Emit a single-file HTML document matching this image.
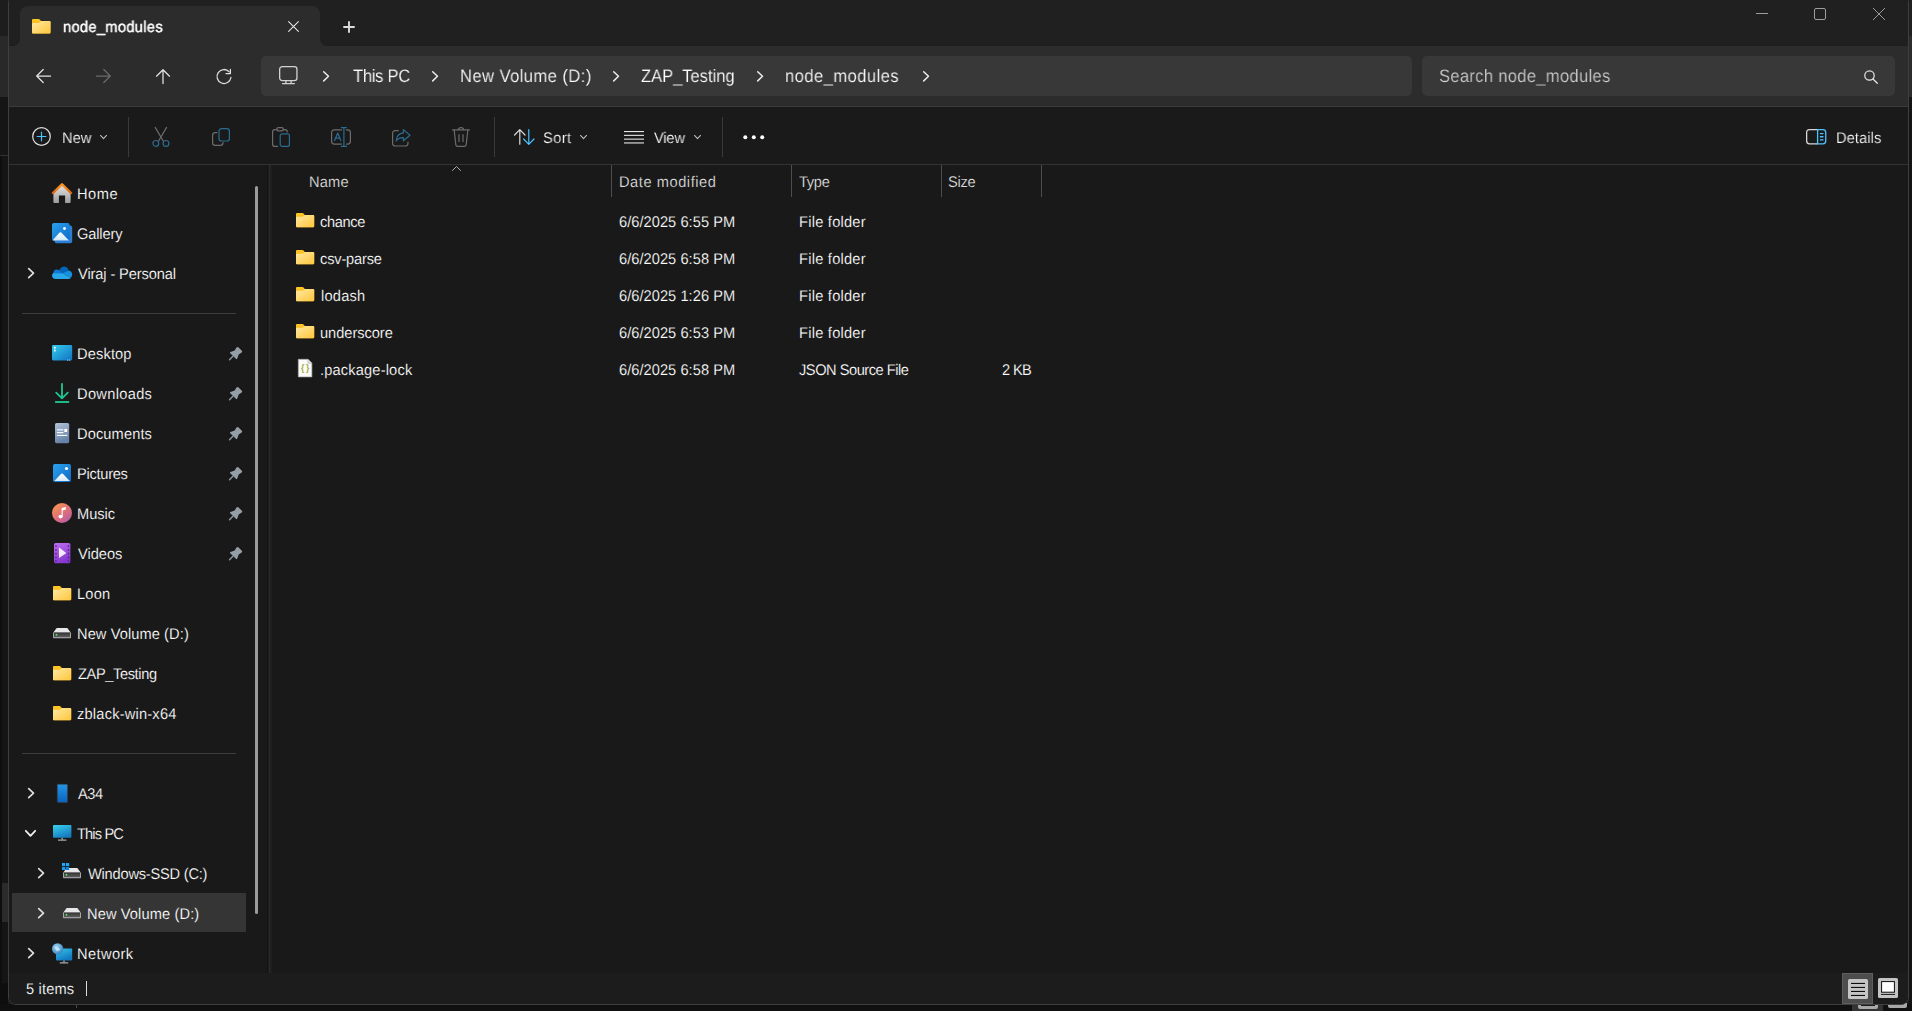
<!DOCTYPE html>
<html lang="en"><head><meta charset="utf-8"><title>node_modules - File Explorer</title>
<style>
*{box-sizing:border-box}
html,body{margin:0;padding:0}
body{width:1912px;height:1011px;overflow:hidden;background:#1c1c1c;font-family:"Liberation Sans",sans-serif;color:#fff;position:relative}
.t{position:absolute;height:20px;line-height:20px;white-space:pre;transform-origin:0 50%;text-rendering:geometricPrecision;-webkit-text-stroke:0.16px #191919}
.a{position:absolute}
svg{position:absolute;overflow:visible}
.win{position:absolute;left:8px;top:-5px;width:1901px;height:1010px;border:1px solid #3f3f3f;border-radius:8px;background:#191919;overflow:hidden}
.win>div{position:absolute;left:0;right:0}
.tabbar{top:0;height:50px;background:#202020;border-bottom:1px solid #1d1d1d}
.navbar{top:50px;height:61px;background:#2c2c2c;border-bottom:1px solid #3b3b3b}
.cmdbar{top:111px;height:58px;background:#1a1a1a;border-bottom:1px solid #333}
.status{top:977px;height:32px;background:#1c1c1c}
.tab{position:absolute;left:20px;top:6px;width:300px;height:40px;background:#2c2c2c;border-radius:8px 8px 0 0}
.tab:before,.tab:after{content:"";position:absolute;bottom:0;width:7px;height:7px;background:radial-gradient(circle at 0 0,rgba(44,44,44,0) 6.5px,#2c2c2c 7.5px)}
.tab:before{left:-7px}
.tab:after{right:-7px;background:radial-gradient(circle at 100% 0,rgba(44,44,44,0) 6.5px,#2c2c2c 7.5px)}
.box{position:absolute;top:56px;height:40px;background:#383838;border-radius:5px}
.vsep{position:absolute;width:1px;background:#3a3a3a}
.hsep{position:absolute;height:1px;background:#3d3d3d}
.colsep{position:absolute;width:1px;top:165px;height:32px;background:#4d4d4d}
.sel{position:absolute;left:12px;top:893px;width:234px;height:39px;background:#353535}
</style></head>
<body>
<div class="a" style="left:0;top:0;width:8px;height:36px;background:#1d1d1d"></div><div class="a" style="left:0;top:36px;width:8px;height:61px;background:#292929"></div><div class="a" style="left:0;top:97px;width:8px;height:58px;background:#151515"></div><div class="a" style="left:0;top:155px;width:8px;height:1px;background:#303030"></div><div class="a" style="left:0;top:156px;width:8px;height:855px;background:#151515"></div><div class="a" style="left:0;top:156px;width:2px;height:855px;background:#0e0e0e"></div><div class="a" style="left:2px;top:883px;width:6px;height:39px;background:#2b2b2b"></div><div class="a" style="left:0;top:983px;width:8px;height:28px;background:#0e0e0e"></div><div class="a" style="left:1909px;top:0;width:3px;height:36px;background:#202020"></div><div class="a" style="left:1909px;top:36px;width:3px;height:61px;background:#2c2c2c"></div><div class="a" style="left:1909px;top:97px;width:3px;height:914px;background:#141414"></div><div class="a" style="left:0;top:1004px;width:1912px;height:7px;background:#101010"></div><div class="a" style="left:76px;top:1005px;width:1px;height:3px;background:#4a4a4a"></div><div class="a" style="left:1852px;top:1003px;width:31px;height:8px;background:#333"></div><div class="a" style="left:1858px;top:1003px;width:20px;height:6px;background:#a8a8a8;border-radius:0 0 2px 2px"></div><div class="a" style="left:1861px;top:1005px;width:14px;height:1px;background:#1a1a1a"></div><div class="a" style="left:1888px;top:1003px;width:19px;height:5px;background:#a8a8a8;border-radius:0 0 2px 2px"></div>
<div class="win"><div class="tabbar"></div><div class="navbar"></div><div class="cmdbar"></div><div class="status"></div></div>
<header class="titlebar">
<div class="tab"></div>
<svg style="left:32px;top:19px" width="18.5" height="14.5" viewBox="0 0 18.5 14.5" ><defs><linearGradient id="g1" x1="0" y1="0" x2="0" y2="1"><stop offset="0" stop-color="#ffc825"/><stop offset="1" stop-color="#e8a410"/></linearGradient><linearGradient id="g2" x1="0" y1="0" x2="1" y2="1"><stop offset="0" stop-color="#ffe9a6"/><stop offset="1" stop-color="#ffc63a"/></linearGradient></defs><g transform="scale(1.0165,1.0211)"><path fill="url(#g1)" d="M0,1 Q0,0 1,0 L6.4,0 Q7.1,0 7.6,0.5 L8.8,1.9 L17.2,1.9 Q18.2,1.9 18.2,2.9 L18.2,13.2 Q18.2,14.2 17.2,14.2 L1,14.2 Q0,14.2 0,13.2 Z"/><path fill="url(#g2)" d="M0,4.8 Q0,3.8 1,3.8 L6.2,3.8 Q6.9,3.8 7.4,3.3 L8.2,2.5 Q8.8,1.9 9.6,1.9 L17.2,1.9 Q18.2,1.9 18.2,2.9 L18.2,13.2 Q18.2,14.2 17.2,14.2 L1,14.2 Q0,14.2 0,13.2Z"/></g></svg>
<span class="t" style="left:62.99px;top:17.66px;font-size:15.4px;letter-spacing:0.355px;transform:scaleX(0.95);will-change:transform;-webkit-text-stroke:0.45px #fff">node_modules</span>
<svg style="left:287.9px;top:20.6px" width="11" height="11" viewBox="0 0 11 11" ><g fill="none" stroke="#e4e4e4" stroke-width="1.1" stroke-linecap="round" stroke-linejoin="round"><path d="M0.6,0.6 L10.4,10.4 M10.4,0.6 L0.6,10.4"/></g></svg><svg style="left:343px;top:21px" width="12" height="12" viewBox="0 0 12 12" shape-rendering="auto"><g fill="none" stroke="#dcdcdc" stroke-width="1.9" stroke-linecap="butt" stroke-linejoin="round"><path d="M6,0.3 V11.7 M0.3,6 H11.7"/></g></svg>
<div class="a" style="left:1756px;top:13px;width:12px;height:1px;background:#9d9d9d"></div><div class="a" style="left:1814px;top:8px;width:12px;height:12px;border:1px solid #9d9d9d;border-radius:2px"></div><svg style="left:1873px;top:8px" width="12" height="12" viewBox="0 0 12 12" ><g fill="none" stroke="#9d9d9d" stroke-width="1.0" stroke-linecap="round" stroke-linejoin="round"><path d="M0.3,0.3 L11.7,11.7 M11.7,0.3 L0.3,11.7"/></g></svg>
</header>
<nav class="navigation">
<svg style="left:36px;top:69px" width="15" height="14" viewBox="0 0 15 14" ><g fill="none" stroke="#e2e2e2" stroke-width="1.25" stroke-linecap="round" stroke-linejoin="round"><path d="M14.6,7 H0.8 M7.2,0.5 L0.7,7 L7.2,13.5"/></g></svg><svg style="left:96px;top:69px" width="15" height="14" viewBox="0 0 15 14" ><g fill="none" stroke="#6b6b6b" stroke-width="1.25" stroke-linecap="round" stroke-linejoin="round"><path d="M0.4,7 H14.2 M7.8,0.5 L14.3,7 L7.8,13.5"/></g></svg><svg style="left:156px;top:69px" width="14" height="15" viewBox="0 0 14 15" ><g fill="none" stroke="#e2e2e2" stroke-width="1.25" stroke-linecap="round" stroke-linejoin="round"><path d="M7,14.6 V0.8 M0.5,7.2 L7,0.7 L13.5,7.2"/></g></svg><svg style="left:215.5px;top:69px" width="16" height="15" viewBox="0 0 16 15" ><g fill="none" stroke="#e2e2e2" stroke-width="1.25" stroke-linecap="round" stroke-linejoin="round"><path d="M14.93,8.47 A7,7 0 1 1 13.2,2.82"/><path d="M14.4,0.4 V4.5 H10"/></g></svg>
<div class="box" style="left:261px;width:1151px"></div>
<svg style="left:278.6px;top:66.4px" width="18.6" height="18.2" viewBox="0 0 18.6 18.2" ><g fill="none" stroke="#d2d2d2" stroke-width="1.3" stroke-linecap="round" stroke-linejoin="round"><rect x="0.65" y="0.65" width="17.3" height="13.9" rx="2.6"/><path d="M6.9,14.6 V17.4 M12.1,14.6 V17.4 M3.5,17.55 H15.4"/></g></svg><svg style="left:322.9px;top:71.2px" width="6.2" height="10.6" viewBox="0 0 6.2 10.6" ><g fill="none" stroke="#ececec" stroke-width="1.5" stroke-linecap="round" stroke-linejoin="round"><path d="M0.7,0.7 L5.5,5.3 L0.7,9.9"/></g></svg><svg style="left:431.9px;top:71.2px" width="6.2" height="10.6" viewBox="0 0 6.2 10.6" ><g fill="none" stroke="#ececec" stroke-width="1.5" stroke-linecap="round" stroke-linejoin="round"><path d="M0.7,0.7 L5.5,5.3 L0.7,9.9"/></g></svg><svg style="left:612.9px;top:71.2px" width="6.2" height="10.6" viewBox="0 0 6.2 10.6" ><g fill="none" stroke="#ececec" stroke-width="1.5" stroke-linecap="round" stroke-linejoin="round"><path d="M0.7,0.7 L5.5,5.3 L0.7,9.9"/></g></svg><svg style="left:756.9px;top:71.2px" width="6.2" height="10.6" viewBox="0 0 6.2 10.6" ><g fill="none" stroke="#ececec" stroke-width="1.5" stroke-linecap="round" stroke-linejoin="round"><path d="M0.7,0.7 L5.5,5.3 L0.7,9.9"/></g></svg><svg style="left:922.9px;top:71.2px" width="6.2" height="10.6" viewBox="0 0 6.2 10.6" ><g fill="none" stroke="#ececec" stroke-width="1.5" stroke-linecap="round" stroke-linejoin="round"><path d="M0.7,0.7 L5.5,5.3 L0.7,9.9"/></g></svg>
<span class="t" style="left:352.50px;top:65.76px;font-size:18px;letter-spacing:-0.304px;transform:scaleX(0.92);will-change:transform;-webkit-text-stroke-color:#383838">This PC</span><span class="t" style="left:460.35px;top:65.76px;font-size:18px;letter-spacing:0.473px;transform:scaleX(0.92);will-change:transform;-webkit-text-stroke-color:#383838">New Volume (D:)</span><span class="t" style="left:641.43px;top:65.76px;font-size:18px;letter-spacing:-0.036px;transform:scaleX(0.92);will-change:transform;-webkit-text-stroke-color:#383838">ZAP_Testing</span><span class="t" style="left:785.10px;top:65.76px;font-size:18px;letter-spacing:0.498px;transform:scaleX(0.92);will-change:transform;-webkit-text-stroke-color:#383838">node_modules</span>
<div class="box" style="left:1422px;width:473px"></div>
<span class="t" style="left:1439.20px;top:65.76px;font-size:18px;letter-spacing:0.336px;transform:scaleX(0.92);will-change:transform;-webkit-text-stroke-color:#383838;color:#cfcfcf">Search node_modules</span>
<svg style="left:1863.5px;top:70px" width="14" height="14" viewBox="0 0 14 14" ><g fill="none" stroke="#e4e4e4" stroke-width="1.25" stroke-linecap="round" stroke-linejoin="round"><circle cx="5.5" cy="5.5" r="4.7"/><path d="M9,9 L13.3,13.3"/></g></svg>
</nav>
<div class="commands">
<svg style="left:31.9px;top:127px" width="19" height="19" viewBox="0 0 19 19" ><g fill="none" stroke="#e0e0e0" stroke-width="1.2" stroke-linecap="round" stroke-linejoin="round"><circle cx="9.5" cy="9.5" r="8.8" stroke="#e0e0e0"/><path d="M5.2,9.5 H13.8 M9.5,5.2 V13.8" stroke="#4cc2ff"/></g></svg><svg style="left:99.6px;top:135.3px" width="7" height="4.2" viewBox="0 0 7 4.2" ><g fill="none" stroke="#bdbdbd" stroke-width="1.1" stroke-linecap="round" stroke-linejoin="round"><path d="M0.5,0.5 L3.5,3.7 L6.5,0.5"/></g></svg><div class="vsep" style="left:128px;top:117px;height:40px"></div><div class="vsep" style="left:494px;top:117px;height:40px"></div><div class="vsep" style="left:722px;top:117px;height:40px"></div><svg style="left:152px;top:127px" width="18" height="20" viewBox="0 0 18 20" ><g fill="none" stroke="#6c6c6c" stroke-width="1.2" stroke-linecap="round" stroke-linejoin="round"><path d="M3.2,0.4 L11.4,14.3 M14.6,0.4 L6.4,14.3" stroke="#6c6c6c"/><circle cx="3.8" cy="16.4" r="2.9" stroke="#2a6c92"/><circle cx="14" cy="16.4" r="2.9" stroke="#2a6c92"/></g></svg><svg style="left:212px;top:128px" width="18" height="18" viewBox="0 0 18 18" ><g fill="none" stroke="#6c6c6c" stroke-width="1.2" stroke-linecap="round" stroke-linejoin="round"><path d="M5,4.6 H3.2 Q0.6,4.6 0.6,7.2 V14.8 Q0.6,17.4 3.2,17.4 H8.4 Q11,17.4 11,14.8 V14.6" stroke="#6c6c6c"/><rect x="7" y="0.6" width="10.4" height="12.4" rx="2.6" stroke="#2a6c92"/></g></svg><svg style="left:272px;top:127px" width="18" height="20" viewBox="0 0 18 20" ><g fill="none" stroke="#6c6c6c" stroke-width="1.2" stroke-linecap="round" stroke-linejoin="round"><path d="M5,2.6 H2.8 Q0.6,2.6 0.6,4.8 V17.2 Q0.6,19.4 2.8,19.4 H5.6 M11.4,2.6 H13 Q15.2,2.6 15.2,4.8 V5" stroke="#6c6c6c"/><rect x="4.8" y="0.6" width="6.6" height="3.2" rx="1.6" stroke="#6c6c6c"/><rect x="8.2" y="6.8" width="9.2" height="12.6" rx="2" stroke="#2a6c92"/></g></svg><svg style="left:331px;top:127px" width="20" height="20" viewBox="0 0 20 20" ><g fill="none" stroke="#6c6c6c" stroke-width="1.2" stroke-linecap="round" stroke-linejoin="round"><path d="M10.4,2.9 H3.4 Q0.6,2.9 0.6,5.7 V14.3 Q0.6,17.1 3.4,17.1 H10.4 M15.4,2.9 H16.6 Q19.4,2.9 19.4,5.7 V14.3 Q19.4,17.1 16.6,17.1 H15.4" stroke="#6c6c6c"/><path d="M12.9,0.6 V19.4 M10.4,0.6 H15.4 M10.4,19.4 H15.4 M3.6,13.6 L6.7,6 L9.8,13.6 M4.6,11.2 H8.8" stroke="#2a6c92"/></g></svg><svg style="left:392px;top:128.5px" width="19" height="18" viewBox="0 0 19 18" ><g fill="none" stroke="#6c6c6c" stroke-width="1.2" stroke-linecap="round" stroke-linejoin="round"><path d="M6.4,1.6 H3.4 Q0.6,1.6 0.6,4.4 V14.2 Q0.6,17 3.4,17 H13.2 Q16,17 16,14.2 V13" stroke="#6c6c6c"/><path d="M11.4,0.6 L18,6.2 L11.4,11.8 V8.6 Q6.2,8.4 4.2,12 Q4.6,4.6 11.4,3.9 Z" stroke="#2a6c92"/></g></svg><svg style="left:452px;top:127px" width="18" height="20" viewBox="0 0 18 20" ><g fill="none" stroke="#6c6c6c" stroke-width="1.2" stroke-linecap="round" stroke-linejoin="round"><path d="M0.6,2.9 H17.4 M6.4,2.6 Q6.6,0.6 9,0.6 Q11.4,0.6 11.6,2.6 M2.2,3.2 L3.8,17.6 Q4,19.4 5.8,19.4 H12.2 Q14,19.4 14.2,17.6 L15.8,3.2 M7,7.6 V14.6 M11,7.6 V14.6" stroke="#6c6c6c"/></g></svg><svg style="left:513.5px;top:129px" width="21" height="16" viewBox="0 0 21 16" ><g fill="none" stroke="#dcdcdc" stroke-width="1.2" stroke-linecap="round" stroke-linejoin="round"><path d="M5.8,15.2 V0.8 M0.6,6 L5.8,0.7 L11,6" stroke="#dcdcdc"/><path d="M14.8,0.6 V15 M9.6,10 L14.8,15.3 L20,10" stroke="#4cc2ff"/></g></svg><svg style="left:579.8px;top:135.3px" width="7" height="4.2" viewBox="0 0 7 4.2" ><g fill="none" stroke="#bdbdbd" stroke-width="1.1" stroke-linecap="round" stroke-linejoin="round"><path d="M0.5,0.5 L3.5,3.7 L6.5,0.5"/></g></svg><svg style="left:624px;top:131px" width="20" height="13" viewBox="0 0 20 13" ><rect x="0" y="0" width="20" height="1.1" fill="#e6e6e6"/><rect x="0" y="3.8" width="20" height="1.1" fill="#e6e6e6"/><rect x="0" y="7.6" width="20" height="1.1" fill="#e6e6e6"/><rect x="0" y="11.4" width="20" height="1.1" fill="#e6e6e6"/></svg><svg style="left:693.5px;top:135.3px" width="7" height="4.2" viewBox="0 0 7 4.2" ><g fill="none" stroke="#bdbdbd" stroke-width="1.1" stroke-linecap="round" stroke-linejoin="round"><path d="M0.5,0.5 L3.5,3.7 L6.5,0.5"/></g></svg><svg style="left:742.5px;top:135px" width="22" height="5" viewBox="0 0 22 5" ><circle cx="2.3" cy="2.3" r="2" fill="#fff"/><circle cx="10.8" cy="2.3" r="2" fill="#fff"/><circle cx="19.2" cy="2.3" r="2" fill="#fff"/></svg><svg style="left:1805.8px;top:129px" width="20.4" height="15.5" viewBox="0 0 20.4 15.5" ><g fill="none" stroke="#d8d8d8" stroke-width="1.3" stroke-linecap="round" stroke-linejoin="round"><path d="M11.6,0.65 H3.4 Q0.65,0.65 0.65,3.4 V12.1 Q0.65,14.85 3.4,14.85 H11.6" stroke="#d8d8d8"/><path d="M11.6,0.65 H17 Q19.75,0.65 19.75,3.4 V12.1 Q19.75,14.85 17,14.85 H11.6 Z M14.4,4.6 H17 M14.4,7.75 H17 M14.4,10.9 H17" stroke="#4cc2ff"/></g></svg>
<span class="t" style="left:61.92px;top:128.66px;font-size:15.4px;letter-spacing:0.022px;transform:scaleX(0.95);will-change:transform;-webkit-text-stroke-color:#1a1a1a">New</span><span class="t" style="left:543.17px;top:128.66px;font-size:15.4px;letter-spacing:0.429px;transform:scaleX(0.95);will-change:transform;-webkit-text-stroke-color:#1a1a1a">Sort</span><span class="t" style="left:653.81px;top:128.66px;font-size:15.4px;letter-spacing:-0.161px;transform:scaleX(0.95);will-change:transform;-webkit-text-stroke-color:#1a1a1a">View</span><span class="t" style="left:1835.92px;top:128.66px;font-size:15.4px;letter-spacing:0.093px;transform:scaleX(0.95);will-change:transform;-webkit-text-stroke-color:#1a1a1a">Details</span>
</div>
<aside class="sidebar">
<div class="sel"></div>
<svg style="left:52px;top:183px" width="20" height="20" viewBox="0 0 20 20" ><defs><linearGradient id="g3" x1="0" y1="0" x2="0" y2="1"><stop offset="0" stop-color="#e4e4e4"/><stop offset="1" stop-color="#9c9c9c"/></linearGradient><linearGradient id="g4" x1="0" y1="0" x2="0" y2="1"><stop offset="0" stop-color="#ff9a2a"/><stop offset="1" stop-color="#e2640a"/></linearGradient></defs><path d="M1.4,9.4 L10,2 L18.6,9.4 V19 Q18.6,20 17.6,20 H13.1 V12.4 H6.9 V20 H2.4 Q1.4,20 1.4,19Z" fill="url(#g3)"/><path d="M0.9,10 L10,1.3 L19.1,10" fill="none" stroke="url(#g4)" stroke-width="2.4" stroke-linecap="round" stroke-linejoin="round"/></svg><svg style="left:52px;top:223px" width="20.2" height="20.2" viewBox="0 0 20.2 20.2" ><defs><linearGradient id="g5" x1="0" y1="0" x2="1" y2="1"><stop offset="0" stop-color="#2aa0ee"/><stop offset="1" stop-color="#0f6cc6"/></linearGradient><linearGradient id="g6" x1="0" y1="0" x2="0" y2="1"><stop offset="0" stop-color="#ffffff"/><stop offset="1" stop-color="#cfe6fb"/></linearGradient></defs><rect x="2.6" y="2.6" width="17.6" height="17.6" rx="2" fill="#2c7ed2"/><rect x="0" y="0" width="17.6" height="17.6" rx="1.8" fill="url(#g5)"/><path d="M0.6,17.2 L7.6,9.6 Q8.4,8.8 9.2,9.6 L16.8,17.2 Q16.6,17.6 16,17.6 H1.6 Q0.8,17.6 0.6,17.2Z" fill="url(#g6)"/><circle cx="12.5" cy="5.5" r="1.5" fill="#fff"/></svg><svg style="left:52px;top:266px" width="20.2" height="13" viewBox="0 0 20.2 13" ><path d="M7.6,3.4 Q9.2,0.6 12,0.6 Q15.6,0.6 16.6,4.6 L11.6,8 L6.4,4.2Z" fill="#0364b8"/><path d="M6.6,3.9 Q5.6,3.4 4.6,3.6 Q1.6,4 1.2,7.2 L4,12 L12,8 Z" fill="#0f78d4"/><path d="M16.6,4.6 Q20,5.2 20.2,8.6 Q20.2,10.6 18.8,11.8 L10.6,7.6 Z" fill="#1490df"/><path d="M1.2,7.2 Q0,8 0,9.6 Q0.2,13 3.6,13 H16.4 Q18,13 18.8,11.8 L10.6,7.6 Z" fill="#28a8ea"/></svg><svg style="left:52px;top:345px" width="20.2" height="15.8" viewBox="0 0 20.2 15.8" ><defs><linearGradient id="g7" x1="0" y1="0" x2="1" y2="1"><stop offset="0" stop-color="#35cdee"/><stop offset="1" stop-color="#0f72c2"/></linearGradient></defs><rect x="0" y="0" width="20.2" height="15.4" rx="1.4" fill="url(#g7)"/><rect x="2" y="1.9" width="1.7" height="1.7" fill="#fff"/><rect x="2" y="4.7" width="1.7" height="1.7" fill="#fff"/><rect x="15.2" y="14.6" width="1" height="1" fill="#d8ecf8"/><rect x="17.2" y="14.6" width="1" height="1" fill="#d8ecf8"/></svg><svg style="left:55px;top:383px" width="14.2" height="20" viewBox="0 0 14.2 20" ><path d="M7,0.8 V15 M1.2,9.6 L7,15.4 L12.8,9.6" fill="none" stroke="#22c493" stroke-width="1.8" stroke-linecap="round" stroke-linejoin="round"/><rect x="0" y="18" width="14.2" height="2" rx="0.6" fill="#1fb888"/></svg><svg style="left:55px;top:422.8px" width="14.2" height="20.2" viewBox="0 0 14.2 20.2" ><defs><linearGradient id="g8" x1="0" y1="0" x2="0.3" y2="1"><stop offset="0" stop-color="#b4c3d8"/><stop offset="1" stop-color="#6682a8"/></linearGradient></defs><rect x="0" y="0" width="14.2" height="20.2" rx="1.6" fill="url(#g8)"/><rect x="2" y="6.3" width="6.4" height="1.1" fill="#fff"/><rect x="2" y="9.1" width="6.4" height="1.1" fill="#fff"/><rect x="2" y="11.9" width="10.2" height="1.1" fill="#fff"/><rect x="9.3" y="5.9" width="2.9" height="3.1" fill="#fff"/></svg><svg style="left:53px;top:464px" width="18" height="18" viewBox="0 0 18 18" ><defs><linearGradient id="g9" x1="0" y1="0" x2="1" y2="1"><stop offset="0" stop-color="#2aa3f0"/><stop offset="1" stop-color="#0f68c2"/></linearGradient><linearGradient id="g10" x1="0" y1="0" x2="0" y2="1"><stop offset="0" stop-color="#ffffff"/><stop offset="1" stop-color="#d6eafc"/></linearGradient></defs><rect x="0" y="0" width="18" height="18" rx="1.8" fill="url(#g9)"/><path d="M1.4,17 L8.2,9.8 Q9,9 9.8,9.8 L16.8,17 Z" fill="url(#g10)"/><circle cx="13.5" cy="4.5" r="1.6" fill="#fff"/></svg><svg style="left:52px;top:503px" width="20" height="20" viewBox="0 0 20 20" ><defs><linearGradient id="g11" x1="0.15" y1="0.1" x2="0.85" y2="0.95"><stop offset="0" stop-color="#f59252"/><stop offset="0.55" stop-color="#dc6f7c"/><stop offset="1" stop-color="#b95aa8"/></linearGradient></defs><circle cx="10" cy="10" r="10" fill="url(#g11)"/><ellipse cx="8.6" cy="13.6" rx="2.1" ry="1.8" fill="#fff"/><path d="M9.6,13.6 V5 L13.8,4 V6.6 L10.7,7.4 V13.6Z" fill="#fff"/></svg><svg style="left:54px;top:543px" width="16.4" height="20.2" viewBox="0 0 16.4 20.2" ><defs><linearGradient id="g12" x1="0" y1="0" x2="0.4" y2="1"><stop offset="0" stop-color="#c070f0"/><stop offset="1" stop-color="#8538cf"/></linearGradient></defs><rect x="0" y="0" width="16.4" height="20.2" rx="1.6" fill="url(#g12)"/><rect x="1.2" y="2.2" width="1.5" height="1.7" rx="0.3" fill="#5a2490"/><rect x="1.2" y="6" width="1.5" height="1.7" rx="0.3" fill="#5a2490"/><rect x="1.2" y="9.8" width="1.5" height="1.7" rx="0.3" fill="#5a2490"/><rect x="1.2" y="13.6" width="1.5" height="1.7" rx="0.3" fill="#5a2490"/><rect x="1.2" y="17.0" width="1.5" height="1.7" rx="0.3" fill="#5a2490"/><rect x="13.7" y="2.2" width="1.5" height="1.7" rx="0.3" fill="#5a2490"/><rect x="13.7" y="6" width="1.5" height="1.7" rx="0.3" fill="#5a2490"/><rect x="13.7" y="9.8" width="1.5" height="1.7" rx="0.3" fill="#5a2490"/><rect x="13.7" y="13.6" width="1.5" height="1.7" rx="0.3" fill="#5a2490"/><rect x="13.7" y="17.0" width="1.5" height="1.7" rx="0.3" fill="#5a2490"/><path d="M5,5.4 Q5,4.5 5.8,5 L11.7,9.4 Q12.3,9.9 11.7,10.4 L5.8,14.6 Q5,15.1 5,14.2Z" fill="#f4ecfb"/></svg><svg style="left:53px;top:585.9px" width="18.2" height="14.3" viewBox="0 0 18.2 14.3" ><defs><linearGradient id="g13" x1="0" y1="0" x2="0" y2="1"><stop offset="0" stop-color="#ffc825"/><stop offset="1" stop-color="#e8a410"/></linearGradient><linearGradient id="g14" x1="0" y1="0" x2="1" y2="1"><stop offset="0" stop-color="#ffe9a6"/><stop offset="1" stop-color="#ffc63a"/></linearGradient></defs><g transform="scale(1.0000,1.0070)"><path fill="url(#g13)" d="M0,1 Q0,0 1,0 L6.4,0 Q7.1,0 7.6,0.5 L8.8,1.9 L17.2,1.9 Q18.2,1.9 18.2,2.9 L18.2,13.2 Q18.2,14.2 17.2,14.2 L1,14.2 Q0,14.2 0,13.2 Z"/><path fill="url(#g14)" d="M0,4.8 Q0,3.8 1,3.8 L6.2,3.8 Q6.9,3.8 7.4,3.3 L8.2,2.5 Q8.8,1.9 9.6,1.9 L17.2,1.9 Q18.2,1.9 18.2,2.9 L18.2,13.2 Q18.2,14.2 17.2,14.2 L1,14.2 Q0,14.2 0,13.2Z"/></g></svg><svg style="left:53px;top:665.9px" width="18.2" height="14.3" viewBox="0 0 18.2 14.3" ><defs><linearGradient id="g15" x1="0" y1="0" x2="0" y2="1"><stop offset="0" stop-color="#ffc825"/><stop offset="1" stop-color="#e8a410"/></linearGradient><linearGradient id="g16" x1="0" y1="0" x2="1" y2="1"><stop offset="0" stop-color="#ffe9a6"/><stop offset="1" stop-color="#ffc63a"/></linearGradient></defs><g transform="scale(1.0000,1.0070)"><path fill="url(#g15)" d="M0,1 Q0,0 1,0 L6.4,0 Q7.1,0 7.6,0.5 L8.8,1.9 L17.2,1.9 Q18.2,1.9 18.2,2.9 L18.2,13.2 Q18.2,14.2 17.2,14.2 L1,14.2 Q0,14.2 0,13.2 Z"/><path fill="url(#g16)" d="M0,4.8 Q0,3.8 1,3.8 L6.2,3.8 Q6.9,3.8 7.4,3.3 L8.2,2.5 Q8.8,1.9 9.6,1.9 L17.2,1.9 Q18.2,1.9 18.2,2.9 L18.2,13.2 Q18.2,14.2 17.2,14.2 L1,14.2 Q0,14.2 0,13.2Z"/></g></svg><svg style="left:53px;top:705.9px" width="18.2" height="14.3" viewBox="0 0 18.2 14.3" ><defs><linearGradient id="g17" x1="0" y1="0" x2="0" y2="1"><stop offset="0" stop-color="#ffc825"/><stop offset="1" stop-color="#e8a410"/></linearGradient><linearGradient id="g18" x1="0" y1="0" x2="1" y2="1"><stop offset="0" stop-color="#ffe9a6"/><stop offset="1" stop-color="#ffc63a"/></linearGradient></defs><g transform="scale(1.0000,1.0070)"><path fill="url(#g17)" d="M0,1 Q0,0 1,0 L6.4,0 Q7.1,0 7.6,0.5 L8.8,1.9 L17.2,1.9 Q18.2,1.9 18.2,2.9 L18.2,13.2 Q18.2,14.2 17.2,14.2 L1,14.2 Q0,14.2 0,13.2 Z"/><path fill="url(#g18)" d="M0,4.8 Q0,3.8 1,3.8 L6.2,3.8 Q6.9,3.8 7.4,3.3 L8.2,2.5 Q8.8,1.9 9.6,1.9 L17.2,1.9 Q18.2,1.9 18.2,2.9 L18.2,13.2 Q18.2,14.2 17.2,14.2 L1,14.2 Q0,14.2 0,13.2Z"/></g></svg><svg style="left:53px;top:627.8px" width="18" height="10.2" viewBox="0 0 18 10.2" ><defs><linearGradient id="g19" x1="0" y1="0" x2="0" y2="1"><stop offset="0" stop-color="#343434"/><stop offset="1" stop-color="#5e5e5e"/></linearGradient></defs><path d="M4,0 H14 Q14.4,0 14.7,0.4 L17.5,4.3 H0.5 L3.3,0.4 Q3.6,0 4,0Z" fill="#e8e8ea"/><rect x="0" y="4.2" width="18" height="6" rx="0.7" fill="#a9a9a9"/><rect x="1" y="4.7" width="16" height="4.5" fill="url(#g19)"/><circle cx="3.5" cy="6.8" r="0.95" fill="#4cf05a"/></svg><svg style="left:63px;top:867.8px" width="18" height="10.2" viewBox="0 0 18 10.2" ><defs><linearGradient id="g20" x1="0" y1="0" x2="0" y2="1"><stop offset="0" stop-color="#343434"/><stop offset="1" stop-color="#5e5e5e"/></linearGradient></defs><path d="M4,0 H14 Q14.4,0 14.7,0.4 L17.5,4.3 H0.5 L3.3,0.4 Q3.6,0 4,0Z" fill="#e8e8ea"/><rect x="0" y="4.2" width="18" height="6" rx="0.7" fill="#a9a9a9"/><rect x="1" y="4.7" width="16" height="4.5" fill="url(#g20)"/><circle cx="3.5" cy="6.8" r="0.95" fill="#4cf05a"/></svg><svg style="left:61.9px;top:862.9px" width="7.2" height="7" viewBox="0 0 7.2 7" ><rect x="0" y="0" width="3.2" height="3.1" fill="#1ca6f6"/><rect x="4" y="0" width="3.2" height="3.1" fill="#1ca6f6"/><rect x="0" y="3.9" width="3.2" height="3.1" fill="#149af0"/><rect x="4" y="3.9" width="3.2" height="3.1" fill="#0a84e2"/></svg><svg style="left:63px;top:907.8px" width="18" height="10.2" viewBox="0 0 18 10.2" ><defs><linearGradient id="g21" x1="0" y1="0" x2="0" y2="1"><stop offset="0" stop-color="#343434"/><stop offset="1" stop-color="#5e5e5e"/></linearGradient></defs><path d="M4,0 H14 Q14.4,0 14.7,0.4 L17.5,4.3 H0.5 L3.3,0.4 Q3.6,0 4,0Z" fill="#e8e8ea"/><rect x="0" y="4.2" width="18" height="6" rx="0.7" fill="#a9a9a9"/><rect x="1" y="4.7" width="16" height="4.5" fill="url(#g21)"/><circle cx="3.5" cy="6.8" r="0.95" fill="#4cf05a"/></svg><svg style="left:56.6px;top:783.6px" width="10.8" height="18.8" viewBox="0 0 10.8 18.8" ><defs><linearGradient id="g22" x1="0" y1="0" x2="0" y2="1"><stop offset="0" stop-color="#2396e6"/><stop offset="1" stop-color="#0b62be"/></linearGradient></defs><rect x="0.3" y="0.3" width="10.2" height="18.2" rx="1" fill="url(#g22)" stroke="#3a3f45" stroke-width="0.6"/></svg><svg style="left:53px;top:825px" width="18.4" height="16" viewBox="0 0 18.4 16" ><defs><linearGradient id="g23" x1="0" y1="0" x2="0.5" y2="1"><stop offset="0" stop-color="#3ad2ee"/><stop offset="1" stop-color="#157cc0"/></linearGradient></defs><rect x="0" y="0" width="18.4" height="12.8" rx="0.8" fill="url(#g23)"/><rect x="8.6" y="12.8" width="1.2" height="2" fill="#aeb6bc"/><rect x="5" y="14.6" width="8.4" height="1" fill="#c8ced2"/></svg><svg style="left:52px;top:942.6px" width="20.4" height="20.6" viewBox="0 0 20.4 20.6" ><defs><linearGradient id="g24" x1="0" y1="0" x2="0.5" y2="1"><stop offset="0" stop-color="#34c6ea"/><stop offset="1" stop-color="#1278c0"/></linearGradient><radialGradient id="g25" cx="0.4" cy="0.35" r="0.7"><stop offset="0" stop-color="#a8d8f4"/><stop offset="1" stop-color="#2f7fc0"/></radialGradient></defs><rect x="4" y="5.4" width="16.2" height="12" rx="0.8" fill="url(#g24)"/><rect x="11.4" y="17.4" width="1.2" height="2.2" fill="#aeb6bc"/><rect x="7.8" y="19.4" width="8.4" height="1" fill="#c8ced2"/><circle cx="5.6" cy="5.8" r="5.6" fill="url(#g25)"/><path d="M2.4,4.2 Q4.4,3 6,4.6 L8.4,6.4 L5,8.4 Z" fill="#d4ecfa" opacity="0.75"/></svg><svg style="left:229px;top:346.7px" width="13.4" height="13.4" viewBox="0 0 13.4 13.4" ><path d="M7.4,0.4 Q8.6,-0.4 9.6,0.5 L12.9,3.8 Q13.7,4.8 12.7,5.6 L9.7,7.4 L8.3,11.6 Q7.8,12.6 6.9,11.8 L1.2,6.2 Q0.5,5.4 1.5,4.9 L5.7,3.6 Z" fill="#939ea6"/><path d="M3.9,9.2 L0.5,12.8" stroke="#939ea6" stroke-width="1.3" stroke-linecap="round"/></svg><svg style="left:229px;top:386.7px" width="13.4" height="13.4" viewBox="0 0 13.4 13.4" ><path d="M7.4,0.4 Q8.6,-0.4 9.6,0.5 L12.9,3.8 Q13.7,4.8 12.7,5.6 L9.7,7.4 L8.3,11.6 Q7.8,12.6 6.9,11.8 L1.2,6.2 Q0.5,5.4 1.5,4.9 L5.7,3.6 Z" fill="#939ea6"/><path d="M3.9,9.2 L0.5,12.8" stroke="#939ea6" stroke-width="1.3" stroke-linecap="round"/></svg><svg style="left:229px;top:426.7px" width="13.4" height="13.4" viewBox="0 0 13.4 13.4" ><path d="M7.4,0.4 Q8.6,-0.4 9.6,0.5 L12.9,3.8 Q13.7,4.8 12.7,5.6 L9.7,7.4 L8.3,11.6 Q7.8,12.6 6.9,11.8 L1.2,6.2 Q0.5,5.4 1.5,4.9 L5.7,3.6 Z" fill="#939ea6"/><path d="M3.9,9.2 L0.5,12.8" stroke="#939ea6" stroke-width="1.3" stroke-linecap="round"/></svg><svg style="left:229px;top:466.7px" width="13.4" height="13.4" viewBox="0 0 13.4 13.4" ><path d="M7.4,0.4 Q8.6,-0.4 9.6,0.5 L12.9,3.8 Q13.7,4.8 12.7,5.6 L9.7,7.4 L8.3,11.6 Q7.8,12.6 6.9,11.8 L1.2,6.2 Q0.5,5.4 1.5,4.9 L5.7,3.6 Z" fill="#939ea6"/><path d="M3.9,9.2 L0.5,12.8" stroke="#939ea6" stroke-width="1.3" stroke-linecap="round"/></svg><svg style="left:229px;top:506.7px" width="13.4" height="13.4" viewBox="0 0 13.4 13.4" ><path d="M7.4,0.4 Q8.6,-0.4 9.6,0.5 L12.9,3.8 Q13.7,4.8 12.7,5.6 L9.7,7.4 L8.3,11.6 Q7.8,12.6 6.9,11.8 L1.2,6.2 Q0.5,5.4 1.5,4.9 L5.7,3.6 Z" fill="#939ea6"/><path d="M3.9,9.2 L0.5,12.8" stroke="#939ea6" stroke-width="1.3" stroke-linecap="round"/></svg><svg style="left:229px;top:546.7px" width="13.4" height="13.4" viewBox="0 0 13.4 13.4" ><path d="M7.4,0.4 Q8.6,-0.4 9.6,0.5 L12.9,3.8 Q13.7,4.8 12.7,5.6 L9.7,7.4 L8.3,11.6 Q7.8,12.6 6.9,11.8 L1.2,6.2 Q0.5,5.4 1.5,4.9 L5.7,3.6 Z" fill="#939ea6"/><path d="M3.9,9.2 L0.5,12.8" stroke="#939ea6" stroke-width="1.3" stroke-linecap="round"/></svg><svg style="left:28.3px;top:268.4px" width="6.2" height="10.4" viewBox="0 0 6.2 10.4" ><g fill="none" stroke="#dedede" stroke-width="1.7" stroke-linecap="round" stroke-linejoin="round"><path d="M0.7,0.7 L5.5,5.2 L0.7,9.700000000000001"/></g></svg><svg style="left:28.3px;top:788.4px" width="6.2" height="10.4" viewBox="0 0 6.2 10.4" ><g fill="none" stroke="#dedede" stroke-width="1.7" stroke-linecap="round" stroke-linejoin="round"><path d="M0.7,0.7 L5.5,5.2 L0.7,9.700000000000001"/></g></svg><svg style="left:28.3px;top:948.4px" width="6.2" height="10.4" viewBox="0 0 6.2 10.4" ><g fill="none" stroke="#dedede" stroke-width="1.7" stroke-linecap="round" stroke-linejoin="round"><path d="M0.7,0.7 L5.5,5.2 L0.7,9.700000000000001"/></g></svg><svg style="left:38.3px;top:868.4px" width="6.2" height="10.4" viewBox="0 0 6.2 10.4" ><g fill="none" stroke="#dedede" stroke-width="1.7" stroke-linecap="round" stroke-linejoin="round"><path d="M0.7,0.7 L5.5,5.2 L0.7,9.700000000000001"/></g></svg><svg style="left:38.3px;top:908.4px" width="6.2" height="10.4" viewBox="0 0 6.2 10.4" ><g fill="none" stroke="#dedede" stroke-width="1.7" stroke-linecap="round" stroke-linejoin="round"><path d="M0.7,0.7 L5.5,5.2 L0.7,9.700000000000001"/></g></svg><svg style="left:25.2px;top:829.8px" width="11" height="7" viewBox="0 0 11 7" ><g fill="none" stroke="#f0f0f0" stroke-width="1.75" stroke-linecap="round" stroke-linejoin="round"><path d="M0.8,0.8 L5.5,5.8 L10.2,0.8"/></g></svg>
<span class="t" style="left:77.34px;top:184.66px;font-size:15.4px;letter-spacing:0.539px;transform:scaleX(0.95)">Home</span><span class="t" style="left:77.06px;top:224.66px;font-size:15.4px;letter-spacing:-0.133px;transform:scaleX(0.95)">Gallery</span><span class="t" style="left:77.52px;top:264.66px;font-size:15.4px;letter-spacing:-0.114px;transform:scaleX(0.95)">Viraj - Personal</span><span class="t" style="left:77.34px;top:344.66px;font-size:15.4px;letter-spacing:0.149px;transform:scaleX(0.95)">Desktop</span><span class="t" style="left:77.34px;top:384.66px;font-size:15.4px;letter-spacing:0.338px;transform:scaleX(0.95)">Downloads</span><span class="t" style="left:77.34px;top:424.66px;font-size:15.4px;letter-spacing:0.122px;transform:scaleX(0.95)">Documents</span><span class="t" style="left:77.34px;top:464.66px;font-size:15.4px;letter-spacing:-0.289px;transform:scaleX(0.95)">Pictures</span><span class="t" style="left:77.34px;top:504.66px;font-size:15.4px;letter-spacing:-0.007px;transform:scaleX(0.95)">Music</span><span class="t" style="left:77.52px;top:544.66px;font-size:15.4px;letter-spacing:-0.023px;transform:scaleX(0.95)">Videos</span><span class="t" style="left:77.34px;top:584.66px;font-size:15.4px;letter-spacing:0.235px;transform:scaleX(0.95)">Loon</span><span class="t" style="left:77.34px;top:624.66px;font-size:15.4px;letter-spacing:0.094px;transform:scaleX(0.95)">New Volume (D:)</span><span class="t" style="left:77.52px;top:664.66px;font-size:15.4px;letter-spacing:-0.409px;transform:scaleX(0.95)">ZAP_Testing</span><span class="t" style="left:77.10px;top:704.66px;font-size:15.4px;letter-spacing:0.215px;transform:scaleX(0.95)">zblack-win-x64</span><span class="t" style="left:77.70px;top:784.66px;font-size:15.4px;letter-spacing:-0.404px;transform:scaleX(0.95)">A34</span><span class="t" style="left:77.22px;top:824.66px;font-size:15.4px;letter-spacing:-0.896px;transform:scaleX(0.95)">This PC</span><span class="t" style="left:77.34px;top:944.66px;font-size:15.4px;letter-spacing:0.436px;transform:scaleX(0.95)">Network</span><span class="t" style="left:87.70px;top:864.66px;font-size:15.4px;letter-spacing:-0.224px;transform:scaleX(0.95)">Windows-SSD (C:)</span><span class="t" style="left:87.34px;top:904.66px;font-size:15.4px;letter-spacing:0.127px;transform:scaleX(0.95);-webkit-text-stroke-color:#353535">New Volume (D:)</span>
<div class="hsep" style="left:22px;top:313px;width:214px"></div>
<div class="hsep" style="left:22px;top:753px;width:214px"></div>
<div class="a" style="left:255px;top:186px;width:3px;height:728px;background:#9b9b9b;border-radius:1.5px"></div>
<div class="a" style="left:267px;top:165px;width:1px;height:808px;background:#141414"></div><div class="a" style="left:268px;top:165px;width:1px;height:808px;background:#1c1c1c"></div><div class="a" style="left:269px;top:165px;width:1px;height:808px;background:#2b2b2b"></div><div class="a" style="left:270px;top:165px;width:2px;height:808px;background:#1f1f1f"></div>
</aside>
<main class="files">
<svg style="left:452px;top:166px" width="9" height="5" viewBox="0 0 9 5" ><g fill="none" stroke="#ababab" stroke-width="1" stroke-linecap="round" stroke-linejoin="round"><path d="M0.5,4.5 L4.5,0.5 L8.5,4.5"/></g></svg>
<span class="t" style="left:309.34px;top:172.66px;font-size:15.4px;letter-spacing:0.206px;transform:scaleX(0.95);color:#dedede">Name</span><span class="t" style="left:619.34px;top:172.66px;font-size:15.4px;letter-spacing:0.586px;transform:scaleX(0.95);color:#dedede">Date modified</span><span class="t" style="left:799.22px;top:172.66px;font-size:15.4px;letter-spacing:-0.319px;transform:scaleX(0.95);color:#dedede">Type</span><span class="t" style="left:947.89px;top:172.66px;font-size:15.4px;letter-spacing:-0.249px;transform:scaleX(0.95);color:#dedede">Size</span>
<div class="colsep" style="left:611px"></div><div class="colsep" style="left:791px"></div><div class="colsep" style="left:941px"></div><div class="colsep" style="left:1041px"></div>
<svg style="left:295.9px;top:212.9px" width="18.2" height="14.2" viewBox="0 0 18.2 14.2" ><defs><linearGradient id="g26" x1="0" y1="0" x2="0" y2="1"><stop offset="0" stop-color="#ffc825"/><stop offset="1" stop-color="#e8a410"/></linearGradient><linearGradient id="g27" x1="0" y1="0" x2="1" y2="1"><stop offset="0" stop-color="#ffe9a6"/><stop offset="1" stop-color="#ffc63a"/></linearGradient></defs><g transform="scale(1.0000,1.0000)"><path fill="url(#g26)" d="M0,1 Q0,0 1,0 L6.4,0 Q7.1,0 7.6,0.5 L8.8,1.9 L17.2,1.9 Q18.2,1.9 18.2,2.9 L18.2,13.2 Q18.2,14.2 17.2,14.2 L1,14.2 Q0,14.2 0,13.2 Z"/><path fill="url(#g27)" d="M0,4.8 Q0,3.8 1,3.8 L6.2,3.8 Q6.9,3.8 7.4,3.3 L8.2,2.5 Q8.8,1.9 9.6,1.9 L17.2,1.9 Q18.2,1.9 18.2,2.9 L18.2,13.2 Q18.2,14.2 17.2,14.2 L1,14.2 Q0,14.2 0,13.2Z"/></g></svg><svg style="left:295.9px;top:249.9px" width="18.2" height="14.2" viewBox="0 0 18.2 14.2" ><defs><linearGradient id="g28" x1="0" y1="0" x2="0" y2="1"><stop offset="0" stop-color="#ffc825"/><stop offset="1" stop-color="#e8a410"/></linearGradient><linearGradient id="g29" x1="0" y1="0" x2="1" y2="1"><stop offset="0" stop-color="#ffe9a6"/><stop offset="1" stop-color="#ffc63a"/></linearGradient></defs><g transform="scale(1.0000,1.0000)"><path fill="url(#g28)" d="M0,1 Q0,0 1,0 L6.4,0 Q7.1,0 7.6,0.5 L8.8,1.9 L17.2,1.9 Q18.2,1.9 18.2,2.9 L18.2,13.2 Q18.2,14.2 17.2,14.2 L1,14.2 Q0,14.2 0,13.2 Z"/><path fill="url(#g29)" d="M0,4.8 Q0,3.8 1,3.8 L6.2,3.8 Q6.9,3.8 7.4,3.3 L8.2,2.5 Q8.8,1.9 9.6,1.9 L17.2,1.9 Q18.2,1.9 18.2,2.9 L18.2,13.2 Q18.2,14.2 17.2,14.2 L1,14.2 Q0,14.2 0,13.2Z"/></g></svg><svg style="left:295.9px;top:286.9px" width="18.2" height="14.2" viewBox="0 0 18.2 14.2" ><defs><linearGradient id="g30" x1="0" y1="0" x2="0" y2="1"><stop offset="0" stop-color="#ffc825"/><stop offset="1" stop-color="#e8a410"/></linearGradient><linearGradient id="g31" x1="0" y1="0" x2="1" y2="1"><stop offset="0" stop-color="#ffe9a6"/><stop offset="1" stop-color="#ffc63a"/></linearGradient></defs><g transform="scale(1.0000,1.0000)"><path fill="url(#g30)" d="M0,1 Q0,0 1,0 L6.4,0 Q7.1,0 7.6,0.5 L8.8,1.9 L17.2,1.9 Q18.2,1.9 18.2,2.9 L18.2,13.2 Q18.2,14.2 17.2,14.2 L1,14.2 Q0,14.2 0,13.2 Z"/><path fill="url(#g31)" d="M0,4.8 Q0,3.8 1,3.8 L6.2,3.8 Q6.9,3.8 7.4,3.3 L8.2,2.5 Q8.8,1.9 9.6,1.9 L17.2,1.9 Q18.2,1.9 18.2,2.9 L18.2,13.2 Q18.2,14.2 17.2,14.2 L1,14.2 Q0,14.2 0,13.2Z"/></g></svg><svg style="left:295.9px;top:323.9px" width="18.2" height="14.2" viewBox="0 0 18.2 14.2" ><defs><linearGradient id="g32" x1="0" y1="0" x2="0" y2="1"><stop offset="0" stop-color="#ffc825"/><stop offset="1" stop-color="#e8a410"/></linearGradient><linearGradient id="g33" x1="0" y1="0" x2="1" y2="1"><stop offset="0" stop-color="#ffe9a6"/><stop offset="1" stop-color="#ffc63a"/></linearGradient></defs><g transform="scale(1.0000,1.0000)"><path fill="url(#g32)" d="M0,1 Q0,0 1,0 L6.4,0 Q7.1,0 7.6,0.5 L8.8,1.9 L17.2,1.9 Q18.2,1.9 18.2,2.9 L18.2,13.2 Q18.2,14.2 17.2,14.2 L1,14.2 Q0,14.2 0,13.2 Z"/><path fill="url(#g33)" d="M0,4.8 Q0,3.8 1,3.8 L6.2,3.8 Q6.9,3.8 7.4,3.3 L8.2,2.5 Q8.8,1.9 9.6,1.9 L17.2,1.9 Q18.2,1.9 18.2,2.9 L18.2,13.2 Q18.2,14.2 17.2,14.2 L1,14.2 Q0,14.2 0,13.2Z"/></g></svg><svg style="left:297.9px;top:358.9px" width="14.2" height="18.2" viewBox="0 0 14.2 18.2" ><path d="M0.3,0.3 H10 L13.9,4.2 V17.9 H0.3Z" fill="#fbfbfb" stroke="#a9a9a9" stroke-width="0.7"/><path d="M10,0.3 V4.2 H13.9" fill="#e4e4e4" stroke="#a9a9a9" stroke-width="0.6"/><text x="7.9" y="12.4" font-size="8.6" font-weight="700" text-anchor="middle" fill="#a6ab3a" letter-spacing="1.5" font-family="Liberation Sans,sans-serif">{}</text></svg>
<span class="t" style="left:319.68px;top:212.66px;font-size:15.4px;letter-spacing:-0.351px;transform:scaleX(0.95)">chance</span><span class="t" style="left:619.06px;top:212.66px;font-size:15.4px;letter-spacing:0.051px;transform:scaleX(0.95)">6/6/2025 6:55 PM</span><span class="t" style="left:799.34px;top:212.66px;font-size:15.4px;letter-spacing:0.253px;transform:scaleX(0.95)">File folder</span><span class="t" style="left:319.68px;top:249.66px;font-size:15.4px;letter-spacing:-0.191px;transform:scaleX(0.95)">csv-parse</span><span class="t" style="left:619.06px;top:249.66px;font-size:15.4px;letter-spacing:0.051px;transform:scaleX(0.95)">6/6/2025 6:58 PM</span><span class="t" style="left:799.34px;top:249.66px;font-size:15.4px;letter-spacing:0.253px;transform:scaleX(0.95)">File folder</span><span class="t" style="left:320.60px;top:286.66px;font-size:15.4px;letter-spacing:0.237px;transform:scaleX(0.95)">lodash</span><span class="t" style="left:619.06px;top:286.66px;font-size:15.4px;letter-spacing:0.051px;transform:scaleX(0.95)">6/6/2025 1:26 PM</span><span class="t" style="left:799.34px;top:286.66px;font-size:15.4px;letter-spacing:0.253px;transform:scaleX(0.95)">File folder</span><span class="t" style="left:319.80px;top:323.66px;font-size:15.4px;letter-spacing:-0.038px;transform:scaleX(0.95)">underscore</span><span class="t" style="left:619.06px;top:323.66px;font-size:15.4px;letter-spacing:0.051px;transform:scaleX(0.95)">6/6/2025 6:53 PM</span><span class="t" style="left:799.34px;top:323.66px;font-size:15.4px;letter-spacing:0.253px;transform:scaleX(0.95)">File folder</span><span class="t" style="left:319.72px;top:360.66px;font-size:15.4px;letter-spacing:0.175px;transform:scaleX(0.95)">.package-lock</span><span class="t" style="left:619.06px;top:360.66px;font-size:15.4px;letter-spacing:0.051px;transform:scaleX(0.95)">6/6/2025 6:58 PM</span><span class="t" style="left:799.31px;top:360.66px;font-size:15.4px;letter-spacing:-0.493px;transform:scaleX(0.95)">JSON Source File</span><span class="t" style="left:1001.77px;top:360.66px;font-size:15.4px;letter-spacing:-0.675px;transform:scaleX(0.95)">2 KB</span>
</main>
<footer class="statusbar">
<span class="t" style="left:25.93px;top:979.66px;font-size:15.4px;letter-spacing:0.165px;transform:scaleX(0.95);-webkit-text-stroke-color:#1c1c1c">5 items</span>
<div class="a" style="left:86px;top:981px;width:1px;height:15px;background:#dcdcdc"></div><div class="a" style="left:1842px;top:973px;width:31px;height:31px;background:#4d4d4d;border:1px solid #5e5e5e"></div><svg style="left:1848px;top:979px" width="20" height="20" viewBox="0 0 20 20" ><rect x="0" y="0" width="20" height="20" rx="1.6" fill="#c4c4c4"/><rect x="3" y="3.9" width="14" height="1.1" fill="#0c0c0c"/><rect x="3" y="7.9" width="14" height="1.1" fill="#0c0c0c"/><rect x="3" y="11.9" width="14" height="1.1" fill="#0c0c0c"/><rect x="3" y="15.9" width="14" height="1.1" fill="#0c0c0c"/></svg><svg style="left:1878px;top:978px" width="20" height="20" viewBox="0 0 20 20" ><rect x="0" y="0" width="20" height="20" rx="1.6" fill="#c4c4c4"/><rect x="3.6" y="3.6" width="12.8" height="10.6" fill="#fff" stroke="#0c0c0c" stroke-width="1"/><rect x="3" y="15.9" width="14" height="1" fill="#1a1a1a"/></svg>
</footer>
</body></html>
